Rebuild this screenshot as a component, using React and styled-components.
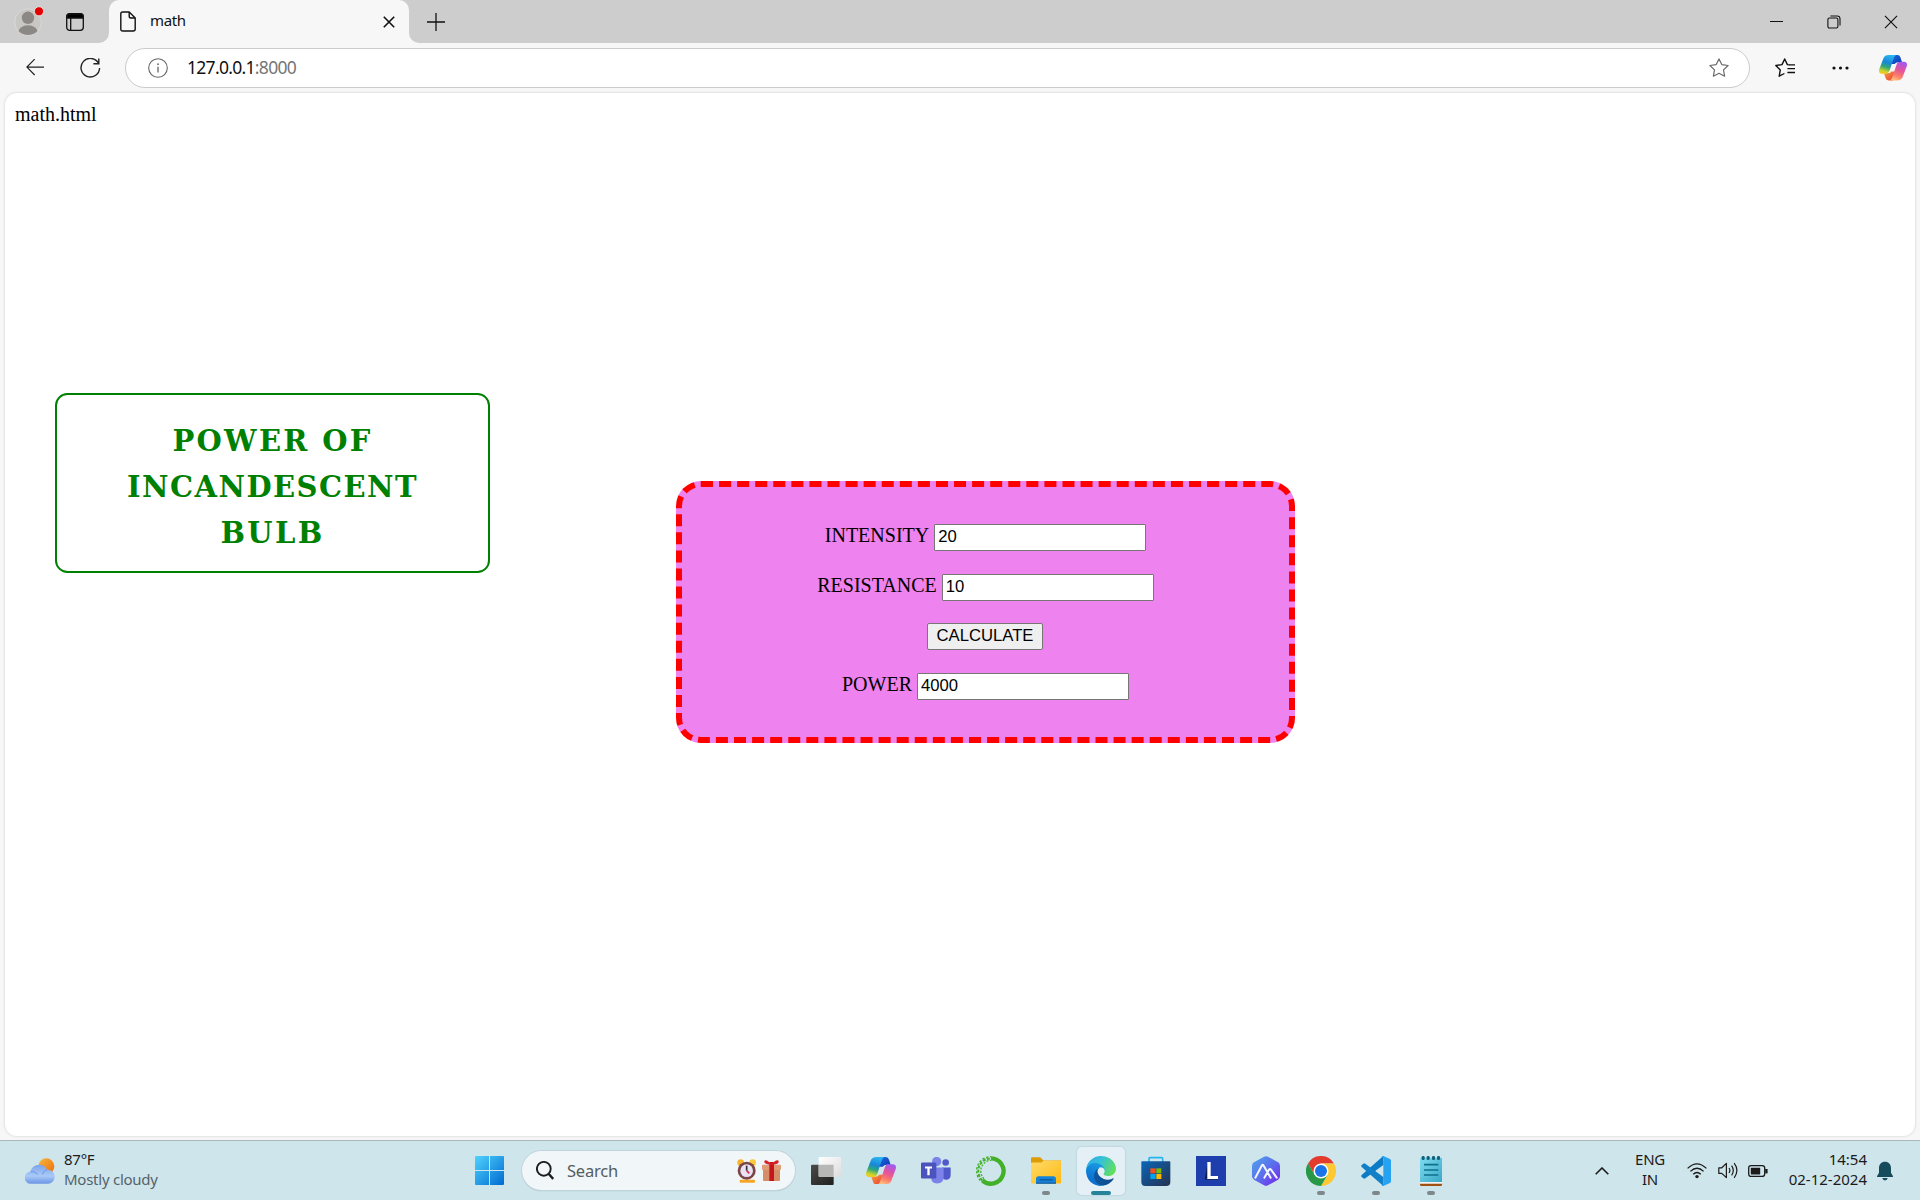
import React from 'react';
import styled, { createGlobalStyle } from 'styled-components';

const GlobalStyle = createGlobalStyle`
  *, *::before, *::after { box-sizing: border-box; }
  body { margin: 0; background: #f7f7f7; }
  svg { display: block; flex: none; }
`;

const ui = `"Noto Sans", "Open Sans", sans-serif`;

const Screen = styled.div`
  display: flex;
  flex-direction: column;
  width: 1920px;
  height: 1200px;
  overflow: hidden;
  background: #f7f7f7;
  font-family: ${ui};
`;

/* ---------- browser title bar ---------- */

const TitleBar = styled.header`
  display: flex;
  height: 43px;
`;

const TitleLeft = styled.div`
  display: flex;
  align-items: center;
  gap: 21px;
  width: 109px;
  padding-left: 14px;
  background: #cdcdcd;
  border-bottom-right-radius: 10px;
`;

const TabSlot = styled.div`
  width: 300px;
  background: linear-gradient(#cdcdcd 50%, #f7f7f7 50%);
`;

const Tab = styled.div`
  display: flex;
  align-items: center;
  height: 43px;
  padding: 0 14px 0 11px;
  border-radius: 10px 10px 0 0;
  background: #f7f7f7;
`;

const TabTitle = styled.span`
  flex: 1;
  margin-left: 14px;
  font-size: 15px;
  line-height: 20px;
  letter-spacing: -0.4px;
  padding-bottom: 4px;
  color: #111;
`;

const TitleRest = styled.div`
  flex: 1;
  display: flex;
  align-items: center;
  justify-content: space-between;
  padding-left: 18px;
  background: #cdcdcd;
  border-bottom-left-radius: 10px;
`;

const WindowButtons = styled.div`
  display: flex;
`;

const WindowButton = styled.div`
  display: flex;
  justify-content: center;
  width: 57.5px;
`;

/* ---------- toolbar ---------- */

const Toolbar = styled.nav`
  display: flex;
  align-items: center;
  height: 50px;
`;

const ToolSlot = styled.div`
  display: flex;
  flex: none;
  align-items: center;
  justify-content: center;
  width: ${(p) => p.$w}px;
  padding-left: ${(p) => p.$pl || 0}px;
`;

const AddressBar = styled.div`
  display: flex;
  align-items: center;
  flex: none;
  width: 1625px;
  height: 40px;
  padding: 0 20px 0 22px;
  border: 1px solid #cbcbcb;
  border-radius: 20px;
  background: #fff;
`;

const Url = styled.span`
  flex: 1;
  margin-left: 19px;
  padding-bottom: 2px;
  font-size: 17.5px;
  line-height: 24px;
  letter-spacing: -0.7px;
  color: #111;
`;

const Port = styled.span`
  color: #767676;
`;

/* ---------- web page ---------- */

const Page = styled.main`
  width: 1910px;
  height: 1043px;
  margin: 0 5px 4px;
  padding: 10px;
  border-radius: 12px;
  background: #fff;
  box-shadow: 0 0 2px 1px #e2e2e2;
  font-family: "Liberation Serif", "Times New Roman", serif;
  font-size: 20px;
  line-height: 23px;
  color: #000;
`;

const Columns = styled.div`
  display: flex;
  align-items: flex-start;
  padding: 267px 0 0 40px;
`;

const Heading = styled.h1`
  width: 435px;
  height: 180px;
  margin: 0;
  padding: 23px 40px 0;
  border: 2px solid green;
  border-radius: 12.5px;
  font-family: "DejaVu Serif", Georgia, serif;
  font-size: 29px;
  font-weight: 700;
  line-height: 46px;
  text-align: center;
  color: green;
`;

const HeadingLine = styled.span`
  display: block;
  letter-spacing: ${(p) => p.$ls}px;
`;

const Form = styled.form`
  display: flex;
  flex-direction: column;
  gap: 22.6px;
  width: 619px;
  height: 262px;
  margin: 88px 0 0 186px;
  padding-top: 37px;
  border: 6px dashed red;
  border-radius: 25px;
  background: violet;
`;

const Row = styled.div`
  display: flex;
  align-items: baseline;
  justify-content: center;
  gap: 5px;
  height: 27px;
`;

const Field = styled.input`
  width: 212px;
  height: 27px;
  padding: 0 3px 1px;
  border: 1px solid #767676;
  border-radius: 1px;
  background: #fff;
  font: 16.67px "Liberation Sans", Arial, sans-serif;
  color: #000;
  outline: none;
`;

const Submit = styled.button`
  width: 116px;
  height: 27px;
  margin-right: 1px;
  padding: 0 0 1px;
  border: 1px solid #767676;
  border-radius: 2px;
  background: #efefef;
  font: 16.67px "Liberation Sans", Arial, sans-serif;
  color: #000;
`;

/* ---------- taskbar ---------- */

const Taskbar = styled.footer`
  display: flex;
  align-items: center;
  height: 60px;
  border-top: 1px solid #a9b7bc;
  background: #cfe5ec;
  font-size: 15px;
  line-height: 20px;
  color: #1b1b1b;
`;

const Weather = styled.div`
  display: flex;
  align-items: center;
  gap: 9px;
  width: 465px;
  padding-left: 25px;
`;

const Lines = styled.div`
  display: flex;
  flex-direction: column;
  align-items: ${(p) => p.$align || 'flex-start'};
  width: ${(p) => (p.$w ? p.$w + 'px' : 'auto')};
  padding-bottom: 3px;
  letter-spacing: ${(p) => p.$ls || 0}px;
  white-space: nowrap;
`;

const Muted = styled.span`
  color: #54636a;
`;

const AppSlot = styled.div`
  position: relative;
  display: flex;
  align-items: center;
  justify-content: center;
  width: 48px;
  height: 48px;
  margin-right: 7px;
  border-radius: 5px;
  background: ${(p) => (p.$active ? '#e5f0f6' : 'transparent')};
  box-shadow: ${(p) => (p.$active ? '0 0 1px 1px rgba(150,180,190,.25)' : 'none')};
`;

const Indicator = styled.i`
  position: absolute;
  bottom: 0;
  width: ${(p) => (p.$active ? 20 : 8)}px;
  height: 4px;
  border-radius: 2px;
  background: ${(p) => (p.$active ? '#25839a' : '#7d888b')};
`;

const SearchBox = styled.div`
  display: flex;
  align-items: center;
  width: 273px;
  height: 39px;
  margin: 0 7px 0 2px;
  padding: 0 14px 0 14px;
  border-radius: 20px;
  background: #f1f6f9;
  box-shadow: 0 0 0 1px #c0d5db, 0 1px 1px #8fa5ad;
`;

const SearchText = styled.span`
  flex: 1;
  margin-left: 13px;
  font-size: 16.5px;
  letter-spacing: -0.2px;
  color: #555d60;
`;

const Tray = styled.div`
  display: flex;
  align-items: center;
  margin-left: auto;
  padding-right: 18px;
`;

/* ---------- icons ---------- */

const Avatar = () => (
  <svg width="31" height="31" viewBox="0 0 31 31">
    <defs><clipPath id="av"><circle cx="14" cy="16" r="13" /></clipPath></defs>
    <circle cx="14" cy="16" r="13.3" fill="#c9c7c4" stroke="#dbd9d6" />
    <g clipPath="url(#av)" fill="#8b8885">
      <circle cx="14" cy="11.8" r="6.2" />
      <ellipse cx="14" cy="27.2" rx="10" ry="8" />
    </g>
    <circle cx="25" cy="5.3" r="4.6" fill="#e40000" stroke="#e7dede" strokeWidth="1" />
  </svg>
);

const Workspaces = () => (
  <svg width="18" height="18" viewBox="0 0 18 18" fill="none" stroke="#111" strokeWidth="1.3">
    <rect x=".7" y=".7" width="16.6" height="16.6" rx="3" />
    <path d="M1 5V3.2Q1 1 3.2 1h11.6Q17 1 17 3.2V5z" fill="#000" />
    <path d="M4.7 5v12" />
  </svg>
);

const FileIcon = () => (
  <svg width="16" height="21" viewBox="0 0 16 21" fill="none" stroke="#111" strokeWidth="1.4" strokeLinejoin="round">
    <path d="M2.6 1h6.6l6 6v11q0 2-2 2H2.8q-2 0-2-2V3q0-2 1.8-2z" />
    <path d="M9.2 1v4.2q0 1.8 1.8 1.8h4.2" />
  </svg>
);

const Cross = ({ size, w }) => (
  <svg width={size} height={size} viewBox="0 0 12 12" stroke="#111" strokeWidth={w}>
    <path d="M.8.8l10.4 10.4M11.2.8L.8 11.2" />
  </svg>
);

const Plus = () => (
  <svg width="18" height="18" viewBox="0 0 18 18" stroke="#111" strokeWidth="1.3">
    <path d="M9 0v18M0 9h18" />
  </svg>
);

const Minimize = () => (
  <svg width="13" height="13" viewBox="0 0 13 13"><path d="M0 6.5h13" stroke="#111" /></svg>
);

const Restore = () => (
  <svg width="14" height="14" viewBox="0 0 14 14" fill="none" stroke="#111" strokeWidth="1.1">
    <rect x=".9" y="3" width="10" height="10" rx="1.5" />
    <path d="M3.4 1h6.8Q13 1 13 3.8v6.8" />
  </svg>
);

const Back = () => (
  <svg width="20" height="18" viewBox="0 0 20 20" fill="none" stroke="#222" strokeWidth="1.3">
    <path d="M9.6.2L1 9l8.6 8.8M1 9h19" />
  </svg>
);

const Refresh = () => (
  <svg width="21" height="21" viewBox="0 0 21 21" fill="none" stroke="#222" strokeWidth="1.4">
    <path d="M18.6 5.500A9.300 9.300 0 1 0 19.600 10M18.800 .6V5.800H13.400" />
  </svg>
);

const Info = () => (
  <svg width="20" height="20" viewBox="0 0 20 20" fill="none" stroke="#666" strokeWidth="1.1">
    <circle cx="10" cy="10" r="9.3" />
    <path d="M10 8.8v5.6" strokeWidth="1.3" />
    <circle cx="10" cy="6.2" r=".9" fill="#666" stroke="none" />
  </svg>
);

const Star = () => (
  <svg width="20" height="20" viewBox="0 0 20 20" fill="none" stroke="#6a6a6a" strokeWidth="1.2" strokeLinejoin="round">
    <path d="M10 .9l2.8 5.7 6.3.9-4.6 4.4 1.1 6.3L10 15.3l-5.6 2.9 1.1-6.3L.9 7.5l6.3-.9z" />
  </svg>
);

const Favorites = () => (
  <svg width="20" height="20" viewBox="0 0 20 20" fill="none" stroke="#111" strokeWidth="1.4" strokeLinejoin="round">
    <path d="M14.4 6.9l-2-.3L9.7 1 7 6.6l-6.2.9 4.5 4.4-1.1 6.3 5.2-2.7" />
    <path d="M14 6.9h6M12.4 10.6H20M12.4 14.5H20" />
  </svg>
);

const Dots = () => (
  <svg width="17" height="4" viewBox="0 0 17 4" fill="#111">
    <circle cx="2" cy="2" r="1.6" /><circle cx="8.5" cy="2" r="1.6" /><circle cx="15" cy="2" r="1.6" />
  </svg>
);

const Copilot = ({ id, width }) => (
  <svg width={width} height={width * 0.911} viewBox="0 0 90 82">
    <defs>
      <linearGradient id={id + 'a'} x1=".6" y1="0" x2=".35" y2="1">
        <stop offset="0" stopColor="#2ab6f0" /><stop offset=".4" stopColor="#1886d8" />
        <stop offset=".65" stopColor="#2fa878" /><stop offset=".9" stopColor="#d2d52a" /><stop offset="1" stopColor="#f2c81c" />
      </linearGradient>
      <linearGradient id={id + 'b'} x1=".7" y1="0" x2=".35" y2="1">
        <stop offset="0" stopColor="#a259f2" /><stop offset=".45" stopColor="#e85496" />
        <stop offset=".75" stopColor="#fb7c6c" /><stop offset="1" stopColor="#ffbd7a" />
      </linearGradient>
      <linearGradient id={id + 'c'} x1="0" y1="0" x2="1" y2="1">
        <stop offset="0" stopColor="#1d6fe0" /><stop offset="1" stopColor="#0a34b5" />
      </linearGradient>
      <linearGradient id={id + 'd'} x1="0" y1="0" x2="1" y2="1">
        <stop offset="0" stopColor="#f9a13a" /><stop offset="1" stopColor="#e83a3a" />
      </linearGradient>
    </defs>
    <path d="M45 0h14q8 0 10 8l5 15H62q-8 0-12 6h-12z" fill={`url(#${id}c)`} />
    <path d="M45 82H31q-8 0-10-8l-5-15h12q8 0 12-6h12z" fill={`url(#${id}d)`} />
    <path d="M31 0h24q-5 2-8 11L34 50q-3 10-13 10H10Q-3 60 1 45L14 11Q18 0 31 0z" fill={`url(#${id}a)`} />
    <path d="M59 82H35q5-2 8-11l13-39q3-10 13-10h11q13 0 9 15L76 71Q72 82 59 82z" fill={`url(#${id}b)`} />
  </svg>
);

const WeatherIcon = () => (
  <svg width="30" height="26" viewBox="0 0 90 76">
    <defs>
      <linearGradient id="sun" x1="0" y1="0" x2="1" y2="1"><stop offset="0" stopColor="#f6b73c" /><stop offset="1" stopColor="#ee6a0c" /></linearGradient>
      <linearGradient id="cl" x1="0" y1="0" x2="0" y2="1"><stop offset="0" stopColor="#7ba4ea" /><stop offset=".6" stopColor="#a9c9f8" /><stop offset="1" stopColor="#6b95e4" /></linearGradient>
    </defs>
    <circle cx="64" cy="24" r="24" fill="url(#sun)" />
    <path d="M18 76a18 18 0 0 1-2-36Q22 19 43 19q16 0 23 15a21 21 0 0 1 4 42z" fill="url(#cl)" />
    <path d="M16 40q14-2 22 8M52 48q4-12 14-14" stroke="#6f99e4" strokeWidth="3" fill="none" />
  </svg>
);

const WindowsLogo = () => (
  <svg width="29" height="29" viewBox="0 0 29 29">
    <defs><linearGradient id="win" x1="0" y1="0" x2="29" y2="29" gradientUnits="userSpaceOnUse"><stop offset="0" stopColor="#4fd3fd" /><stop offset="1" stopColor="#0069d1" /></linearGradient></defs>
    <path fill="url(#win)" d="M1 0h13v14H0V1q0-1 1-1zM15 0h13q1 0 1 1v13H15zM0 15h14v14H1q-1 0-1-1zM15 15h14v13q0 1-1 1H15z" />
  </svg>
);

const Magnifier = () => (
  <svg width="18" height="19" viewBox="0 0 18 19" fill="none" stroke="#1d1d1d" strokeWidth="1.9">
    <circle cx="7.8" cy="7.8" r="6.9" /><path d="M12.6 12.8l4.6 5.2" strokeWidth="2.4" />
  </svg>
);

const AlarmClock = () => (
  <svg width="19" height="24" viewBox="0 0 57 72">
    <rect x="8" y="62" width="46" height="9" rx="3" fill="#f6a623" />
    <circle cx="11" cy="11" r="10" fill="#f6b52b" /><circle cx="47" cy="11" r="10" fill="#fbc93d" />
    <circle cx="29" cy="35" r="27" fill="#7c4646" /><circle cx="29" cy="35" r="19" fill="#e8e3f4" />
    <path d="M29 20v15" stroke="#333" strokeWidth="5" /><path d="M29 35l8 8" stroke="#e3264a" strokeWidth="5" />
  </svg>
);

const Gift = () => (
  <svg width="19" height="21" viewBox="0 0 57 63">
    <rect x="3" y="22" width="51" height="41" rx="3" fill="#d58e68" />
    <rect x="0" y="14" width="57" height="16" rx="3" fill="#e09c74" />
    <rect x="22" y="6" width="14" height="57" fill="#c4161c" />
    <path d="M28 12Q10-6 7 4q-2 10 21 10Q52 14 50 4q-3-10-22 8z" fill="#d8232a" />
  </svg>
);

const TaskView = () => (
  <svg width="30" height="28" viewBox="0 0 90 84">
    <defs>
      <linearGradient id="tv" x1="0" y1="0" x2="1" y2="1"><stop offset="0" stopColor="#4a4a48" /><stop offset="1" stopColor="#20201f" /></linearGradient>
      <linearGradient id="tw" x1="0" y1="0" x2="1" y2="1"><stop offset="0" stopColor="#fff" /><stop offset="1" stopColor="#dcdcdc" /></linearGradient>
    </defs>
    <rect y="23" width="68" height="61" rx="3" fill="url(#tv)" />
    <rect x="23" y="0" width="67" height="60" rx="3" fill="url(#tw)" />
    <path d="M23 23h45v37H26q-3 0-3-3z" fill="#b7b7b6" />
  </svg>
);

const Teams = () => (
  <svg width="30" height="27" viewBox="0 0 90 80">
    <circle cx="74" cy="16" r="10" fill="#5059c9" /><circle cx="47" cy="13" r="14" fill="#7b83eb" />
    <path d="M64 31h25v22q0 15-14 15-11 0-11-12z" fill="#5059c9" />
    <path d="M30 31h38v27q0 21-20 21-18 0-18-21z" fill="#7b83eb" />
    <rect y="16" width="46" height="48" rx="4" fill="#4b53bc" />
    <path d="M12 28h21v6h-7v20h-7V34h-7z" fill="#fff" />
  </svg>
);

const Anaconda = () => (
  <svg width="30" height="30" viewBox="0 0 90 90" fill="none" stroke="#43b02a">
    <path d="M45 7A38 38 0 1 1 19 73" strokeWidth="13" />
    <path d="M19 73A38 38 0 0 1 45 7" strokeWidth="6" strokeDasharray="9 4" />
    <path d="M13 74A43 43 0 0 1 45 2" strokeWidth="4" strokeDasharray="7 5" />
    <path d="M24 68A32 32 0 0 1 45 13" strokeWidth="4" strokeDasharray="6 4" />
  </svg>
);

const Explorer = () => (
  <svg width="30" height="27" viewBox="0 0 90 80">
    <defs><linearGradient id="fo" x1="0" y1="0" x2="1" y2="1"><stop offset="0" stopColor="#ffdb69" /><stop offset="1" stopColor="#fdb913" /></linearGradient></defs>
    <path d="M0 4q0-4 4-4h22q3 0 5 3l6 7H90v20H0z" fill="#dd9b08" />
    <path d="M0 19q0-3 3-3h27q3 0 5-3l3-3h48q4 0 4 4v62q0 3-3 3H3q-3 0-3-3z" fill="url(#fo)" />
    <path d="M15 79V65q0-8 8-8h44q8 0 8 8v14z" fill="#1683d8" />
    <path d="M26 68h39" stroke="#0b5699" strokeWidth="4" /><path d="M15 78h60" stroke="#0b5699" strokeWidth="3" />
  </svg>
);

const Edge = () => (
  <svg width="30" height="30" viewBox="0 0 256 256">
    <defs>
      <linearGradient id="e1" x1="0" y1="0" x2="1" y2="0"><stop offset="0" stopColor="#0c59a4" /><stop offset="1" stopColor="#114a8b" /></linearGradient>
      <linearGradient id="e2" x1=".6" y1="0" x2=".3" y2="1"><stop offset="0" stopColor="#1b9de2" /><stop offset=".5" stopColor="#0f7fd8" /><stop offset="1" stopColor="#0b68c8" /></linearGradient>
      <linearGradient id="e3" x1="0" y1=".2" x2="1" y2=".6"><stop offset="0" stopColor="#2fa9e8" /><stop offset=".45" stopColor="#35c1d6" /><stop offset="1" stopColor="#63e05a" /></linearGradient>
    </defs>
    <path fill="url(#e1)" d="M231 190.5c-3.4 1.8-6.9 3.4-10.5 4.7a101.4 101.4 0 0 1-35.3 6.4c-46.5 0-87-32-87-73a31 31 0 0 1 16-26.7c-42 1.7-52.8 45.5-52.8 71.1 0 72.5 66.8 79.8 81.2 79.8 7.8 0 19.4-2.3 26.4-4.5l1.2-.4a128.3 128.3 0 0 0 66.5-52.8 4 4 0 0 0-5.7-4.6Z" />
    <path fill="url(#e2)" d="M105.7 241.4a79.2 79.2 0 0 1-22.7-21.3 80.7 80.7 0 0 1 29.5-120c3.1-1.5 8.4-4.1 15.5-4a32.4 32.4 0 0 1 25.7 13 31.9 31.9 0 0 1 6.3 18.7c0-.2 24.5-79.6-80-79.6-43.9 0-80 41.7-80 78.2a130.2 130.2 0 0 0 12.1 56 128 128 0 0 0 156.4 67 75.5 75.5 0 0 1-62.8-8Z" />
    <path fill="url(#e3)" d="M152.3 148.9c-.9 1-3.4 2.5-3.4 5.6 0 2.6 1.7 5.2 4.8 7.3 14.3 10 41.4 8.6 41.5 8.6a59.6 59.6 0 0 0 30.3-8.3 61.4 61.4 0 0 0 30.4-52.9c.3-22.4-8-37.3-11.3-43.9C223.5 23.9 177.7 0 128 0A128 128 0 0 0 0 126.2c.5-36.5 36.8-66 80-66 3.5 0 23.5.3 42 10a72.6 72.6 0 0 1 30.9 29.3c6.1 10.6 7.2 24.1 7.2 29.5s-2.7 13.3-7.8 19.9Z" />
  </svg>
);

const Store = () => (
  <svg width="30" height="30" viewBox="0 0 90 90">
    <defs><linearGradient id="st" x1="0" y1="0" x2="1" y2="1"><stop offset="0" stopColor="#0a66b8" /><stop offset="1" stopColor="#26324f" /></linearGradient></defs>
    <path d="M24 18V8q0-3 3-3h35q3 0 3 3v10" fill="none" stroke="#26b5ee" strokeWidth="5" />
    <path d="M1 18q0-2 2-2h83q2 0 2 2v60q0 12-12 12H13Q1 90 1 78z" fill="url(#st)" />
    <path d="M28 37h16v15H28z" fill="#f25022" /><path d="M46 37h15v15H46z" fill="#7fba00" />
    <path d="M28 54h16v15H28z" fill="#00a4ef" /><path d="M46 54h15v15H46z" fill="#ffb900" />
  </svg>
);

const LTile = () => (
  <svg width="30" height="30" viewBox="0 0 90 90">
    <path d="M0 0h90v90H0z" fill="#1f3eae" />
    <path d="M34 18v46l-8 7 7-40z" fill="#0a1f4a" /><path d="M26 71l8-8h32l-1 9z" fill="#12305f" />
    <path d="M34 18h10v42h22v9H34z" fill="#fff" />
  </svg>
);

const HexPeaks = () => (
  <svg width="28" height="30" viewBox="0 0 84 90">
    <defs><linearGradient id="hx" x1="0" y1="0" x2="1" y2="1"><stop offset="0" stopColor="#4fa5ea" /><stop offset=".5" stopColor="#5a70ee" /><stop offset="1" stopColor="#7a1fe8" /></linearGradient></defs>
    <path d="M36 2q6-3 12 0l30 17q6 4 6 10v32q0 6-6 10L48 88q-6 3-12 0L6 71q-6-4-6-10V29q0-6 6-10z" fill="url(#hx)" />
    <path d="M10 65l19-36q3-5 6 0l21 36M37 65l14-24q3-4 6 0l17 24" stroke="#f2f4ff" strokeWidth="6" fill="none" strokeLinecap="round" />
  </svg>
);

const Chrome = () => (
  <svg width="30" height="30" viewBox="0 0 90 90">
    <path d="M6 22.5A45 45 0 0 1 84 22.5H45L25.5 56.3z" fill="#e33b2e" />
    <path d="M84 22.5A45 45 0 0 1 45 90L64.5 56.3 45 22.5z" fill="#fcc934" />
    <path d="M45 90A45 45 0 0 1 6 22.5l19.5 33.8h39z" fill="#279847" />
    <circle cx="45" cy="45" r="22.5" fill="#fff" /><circle cx="45" cy="45" r="18" fill="#1b73e8" />
  </svg>
);

const VSCode = () => (
  <svg width="30" height="30" viewBox="0 0 90 90">
    <path d="M66 1L2 57q-3 3 0 6l5 4q3 2 6 0L68 26z" fill="#0a7bc4" />
    <path d="M66 89L2 33q-3-3 0-6l5-4q3-2 6 0l55 41z" fill="#1180c8" />
    <path d="M67 0l20 9q3 2 3 5v62q0 3-3 5l-20 9q-5 0-5-3 5 0 5-5V8q0-5-5-5 0-3 5-3z" fill="#27a2f0" />
  </svg>
);

const Notepad = () => (
  <svg width="22" height="30" viewBox="0 0 66 90">
    <defs><linearGradient id="np" x1="0" y1="0" x2="1" y2="1"><stop offset="0" stopColor="#7fdcf0" /><stop offset="1" stopColor="#38a8c8" /></linearGradient></defs>
    <path d="M0 82h66v4q0 4-4 4H4q-4 0-4-4z" fill="#a0500f" />
    <path d="M0 6h66v77H0z" fill="#f4f4f4" /><path d="M0 8q0-3 3-3h60q3 0 3 3v70H0z" fill="url(#np)" />
    <g fill="#12607c"><rect x="5" y="0" width="9" height="12" rx="4" /><rect x="20" y="0" width="9" height="12" rx="4" /><rect x="36" y="0" width="9" height="12" rx="4" /><rect x="51" y="0" width="9" height="12" rx="4" /></g>
    <path d="M12 26h43M12 42h43M12 57h43" stroke="#0f708c" strokeWidth="5" />
  </svg>
);

const Chevron = () => (
  <svg width="14" height="8" viewBox="0 0 14 8" fill="none" stroke="#1b1b1b" strokeWidth="1.6"><path d="M.7 7.3L7 1l6.3 6.3" /></svg>
);

const Wifi = () => (
  <svg width="20" height="16" viewBox="0 0 20 16" fill="none" stroke="#1b1b1b" strokeWidth="1.3">
    <path d="M.6 5.4q9.4-9 18.8 0M3.4 8.4q6.6-6.4 13.2 0M6.2 11.2q3.8-3.4 7.6 0" /><circle cx="10" cy="13.6" r="1.7" fill="#1b1b1b" stroke="none" />
  </svg>
);

const Volume = () => (
  <svg width="20" height="17" viewBox="0 0 20 17" fill="none" stroke="#1b1b1b" strokeWidth="1.2" strokeLinejoin="round">
    <path d="M.8 5.8h3L8.4 1.4v14.2L3.8 11.4h-3zM11 6q1.8 2.5 0 5M13.6 3.6q3.4 4.9 0 9.8M16.2 1.2q5.4 7.3 0 14.6" />
  </svg>
);

const Battery = () => (
  <svg width="20" height="12" viewBox="0 0 20 12" fill="none" stroke="#1b1b1b" strokeWidth="1.3">
    <rect x=".7" y=".7" width="16" height="10.8" rx="2.4" /><rect x="2.8" y="2.8" width="9.4" height="6.6" rx=".6" fill="#1b1b1b" stroke="none" /><path d="M18.4 4v4.4" strokeWidth="2.4" />
  </svg>
);

const Bell = () => (
  <svg width="16" height="20" viewBox="0 0 16 20" fill="#164b5c">
    <path d="M8 .8c3.600 0 6 2.600 6 6.200v4.800l2 3.400q.2.8-.8.8H.8Q-.2 16 0 15.200l2-3.400V7C2 3.400 4.400.8 8 .8zM5.200 17h5.600q-.6 2.400-2.800 2.400T5.200 17z" />
  </svg>
);

const apps = [
  { icon: <TaskView /> },
  { icon: <Copilot id="cb" width={30} /> },
  { icon: <Teams /> },
  { icon: <Anaconda /> },
  { icon: <Explorer />, running: true },
  { icon: <Edge />, running: true, active: true },
  { icon: <Store /> },
  { icon: <LTile /> },
  { icon: <HexPeaks /> },
  { icon: <Chrome />, running: true },
  { icon: <VSCode />, running: true },
  { icon: <Notepad />, running: true },
];

export default function App() {
  return (
    <Screen>
      <GlobalStyle />
      <TitleBar>
        <TitleLeft><Avatar /><Workspaces /></TitleLeft>
        <TabSlot>
          <Tab>
            <FileIcon />
            <TabTitle>math</TabTitle>
            <Cross size={12} w={1.6} />
          </Tab>
        </TabSlot>
        <TitleRest>
          <Plus />
          <WindowButtons>
            <WindowButton><Minimize /></WindowButton>
            <WindowButton><Restore /></WindowButton>
            <WindowButton><Cross size={14} w={1} /></WindowButton>
          </WindowButtons>
        </TitleRest>
      </TitleBar>

      <Toolbar>
        <ToolSlot $w={70}><Back /></ToolSlot>
        <ToolSlot $w={40}><Refresh /></ToolSlot>
        <ToolSlot $w={15} />
        <AddressBar>
          <Info />
          <Url>127.0.0.1<Port>:8000</Port></Url>
          <Star />
        </AddressBar>
        <ToolSlot $w={70}><Favorites /></ToolSlot>
        <ToolSlot $w={40}><Dots /></ToolSlot>
        <ToolSlot $w={60} $pl={6}><Copilot id="ca" width={28} /></ToolSlot>
      </Toolbar>

      <Page>
        math.html
        <Columns>
          <Heading>
            <HeadingLine $ls={2.3}>POWER OF</HeadingLine>
            <HeadingLine $ls={1.45}>INCANDESCENT</HeadingLine>
            <HeadingLine $ls={2.3}>BULB</HeadingLine>
          </Heading>
          <Form>
            <Row><label htmlFor="i">INTENSITY</label><Field id="i" defaultValue="20" /></Row>
            <Row><label htmlFor="r">RESISTANCE</label><Field id="r" defaultValue="10" /></Row>
            <Row><Submit type="button">CALCULATE</Submit></Row>
            <Row><label htmlFor="p">POWER</label><Field id="p" defaultValue="4000" /></Row>
          </Form>
        </Columns>
      </Page>

      <Taskbar>
        <Weather>
          <WeatherIcon />
          <Lines $ls={-0.25}><span>87°F</span><Muted>Mostly cloudy</Muted></Lines>
        </Weather>
        <AppSlot><WindowsLogo /></AppSlot>
        <SearchBox>
          <Magnifier />
          <SearchText>Search</SearchText>
          <AlarmClock />
          <ToolSlot $w={6} />
          <Gift />
        </SearchBox>
        {apps.map((a, i) => (
          <AppSlot key={i} $active={a.active}>
            {a.icon}
            {a.running && <Indicator $active={a.active} />}
          </AppSlot>
        ))}
        <Tray>
          <ToolSlot $w={40}><Chevron /></ToolSlot>
          <Lines $align="center" $w={56} $ls={-0.3}><span>ENG</span><span>IN</span></Lines>
          <ToolSlot $w={38}><Wifi /></ToolSlot>
          <ToolSlot $w={24}><Volume /></ToolSlot>
          <ToolSlot $w={36}><Battery /></ToolSlot>
          <Lines $align="flex-end" $w={91} $ls={0}><span>14:54</span><span>02-12-2024</span></Lines>
          <ToolSlot $w={35}><Bell /></ToolSlot>
        </Tray>
      </Taskbar>
    </Screen>
  );
}
